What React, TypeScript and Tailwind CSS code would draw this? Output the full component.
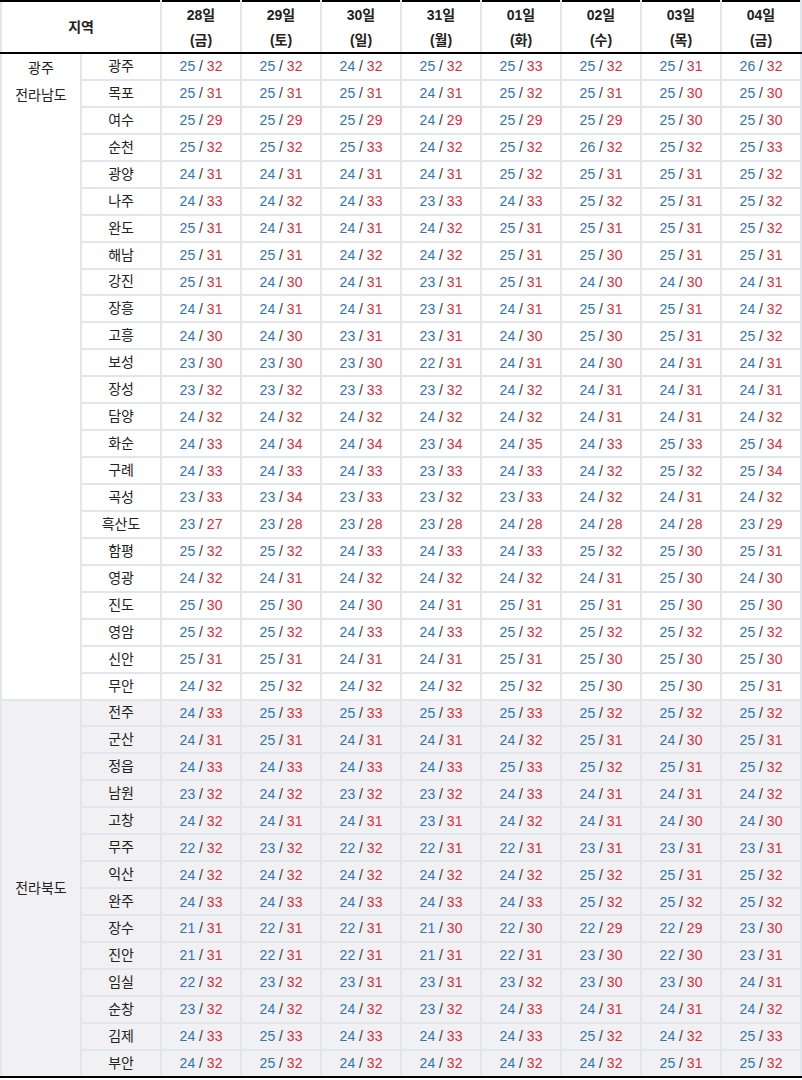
const days = [
  ["28일", "(금)"],
  ["29일", "(토)"],
  ["30일", "(일)"],
  ["31일", "(월)"],
  ["01일", "(화)"],
  ["02일", "(수)"],
  ["03일", "(목)"],
  ["04일", "(금)"],
];

// each row: city, then "min/max" per day
const jeonnam: [string, string][] = [
  ["광주", "25/32 25/32 24/32 25/32 25/33 25/32 25/31 26/32"],
  ["목포", "25/31 25/31 25/31 24/31 25/32 25/31 25/30 25/30"],
  ["여수", "25/29 25/29 25/29 24/29 25/29 25/29 25/30 25/30"],
  ["순천", "25/32 25/32 25/33 24/32 25/32 26/32 25/32 25/33"],
  ["광양", "24/31 24/31 24/31 24/31 25/32 25/31 25/31 25/32"],
  ["나주", "24/33 24/32 24/33 23/33 24/33 25/32 25/31 25/32"],
  ["완도", "25/31 24/31 24/31 24/32 25/31 25/31 25/31 25/32"],
  ["해남", "25/31 25/31 24/32 24/32 25/31 25/30 25/31 25/31"],
  ["강진", "25/31 24/30 24/31 23/31 25/31 24/30 24/30 24/31"],
  ["장흥", "24/31 24/31 24/31 23/31 24/31 25/31 25/31 24/32"],
  ["고흥", "24/30 24/30 23/31 23/31 24/30 25/30 25/31 25/32"],
  ["보성", "23/30 23/30 23/30 22/31 24/31 24/30 24/31 24/31"],
  ["장성", "23/32 23/32 23/33 23/32 24/32 24/31 24/31 24/31"],
  ["담양", "24/32 24/32 24/32 24/32 24/32 24/31 24/31 24/32"],
  ["화순", "24/33 24/34 24/34 23/34 24/35 24/33 25/33 25/34"],
  ["구례", "24/33 24/33 24/33 23/33 24/33 24/32 25/32 25/34"],
  ["곡성", "23/33 23/34 23/33 23/32 23/33 24/32 24/31 24/32"],
  ["흑산도", "23/27 23/28 23/28 23/28 24/28 24/28 24/28 23/29"],
  ["함평", "25/32 25/32 24/33 24/33 24/33 25/32 25/30 25/31"],
  ["영광", "24/32 24/31 24/32 24/32 24/32 24/31 25/30 24/30"],
  ["진도", "25/30 25/30 24/30 24/31 25/31 25/31 25/30 25/30"],
  ["영암", "25/32 25/32 24/33 24/33 25/32 25/32 25/32 25/32"],
  ["신안", "25/31 25/31 24/31 24/31 25/31 25/30 25/30 25/30"],
  ["무안", "24/32 25/32 24/32 24/32 25/32 25/30 25/30 25/31"],
];

const jeonbuk: [string, string][] = [
  ["전주", "24/33 25/33 25/33 25/33 25/33 25/32 25/32 25/32"],
  ["군산", "24/31 25/31 24/31 24/31 24/32 25/31 24/30 25/31"],
  ["정읍", "24/33 24/33 24/33 24/33 25/33 25/32 25/31 25/32"],
  ["남원", "23/32 24/32 23/32 23/32 24/33 24/31 24/31 24/32"],
  ["고창", "24/32 24/31 24/31 23/31 24/32 24/31 24/30 24/30"],
  ["무주", "22/32 23/32 22/32 22/31 22/31 23/31 23/31 23/31"],
  ["익산", "24/32 24/32 24/32 24/32 24/32 25/32 25/31 25/32"],
  ["완주", "24/33 24/33 24/33 24/33 24/33 25/32 25/32 25/32"],
  ["장수", "21/31 22/31 22/31 21/30 22/30 22/29 22/29 23/30"],
  ["진안", "21/31 22/31 22/31 21/31 22/31 23/30 22/30 23/31"],
  ["임실", "22/32 23/32 23/31 23/31 23/32 23/30 23/30 24/31"],
  ["순창", "23/32 24/32 24/32 23/32 24/33 24/31 24/31 24/32"],
  ["김제", "24/33 25/33 24/33 24/33 24/33 25/32 24/32 25/33"],
  ["부안", "24/32 25/32 24/32 24/32 24/32 24/32 25/31 25/32"],
];

function Temp({ v }: { v: string }) {
  const [lo, hi] = v.split("/");
  return (
    <span className="font-['Liberation_Sans','Noto_Sans_CJK_KR',sans-serif] text-[14px]">
      <span className="text-[#2e74b5]">{lo}</span>
      <span className="text-[#333]"> / </span>
      <span className="text-[#d92e3d]">{hi}</span>
    </span>
  );
}

function Rows({
  rows,
  region,
  gray,
  last,
}: {
  rows: [string, string][];
  region: React.ReactNode;
  gray?: boolean;
  last?: boolean;
}) {
  return (
    <>
      {rows.map(([city, temps], i) => {
        const isLast = last && i === rows.length - 1;
        const cell =
          "h-[26.95px] p-0 border-2 border-[#e1e5ec] text-center " + (isLast ? "border-b-black" : "");
        return (
          <tr key={city} className={gray ? "bg-[#f1f1f3]" : ""}>
            {i === 0 && (
              <td
                rowSpan={rows.length}
                className={
                  "border-2 border-[#e1e5ec] text-center text-[14px] text-[#222] leading-[27px] " +
                  (gray ? "align-middle " : "align-top pt-[1px] ") +
                  (last ? "border-b-black" : "")
                }
              >
                {region}
              </td>
            )}
            <td className={cell + " text-[14px] text-[#222]"}>{city}</td>
            {temps.split(" ").map((t, j) => (
              <td key={j} className={cell}>
                <Temp v={t} />
              </td>
            ))}
          </tr>
        );
      })}
    </>
  );
}

export default function App() {
  return (
    <div className="w-[802px] bg-white font-['Liberation_Sans','Noto_Sans_CJK_KR',sans-serif]">
      <table className="w-[800px] table-fixed border-collapse">
        <colgroup>
          {Array.from({ length: 10 }).map((_, i) => (
            <col key={i} className="w-[80px]" />
          ))}
        </colgroup>
        <thead>
          <tr>
            <th
              colSpan={2}
              className="border-x-2 border-x-[#e1e5ec] border-t-2 border-t-black border-b-2 border-b-black text-[14px] font-bold text-[#222] align-middle"
            >
              지역
            </th>
            {days.map(([d, w]) => (
              <th
                key={d}
                className="h-[50px] border-x-2 border-x-[#e1e5ec] border-t-2 border-t-black border-b-2 border-b-black text-[14px] font-bold text-[#222] p-0"
              >
                <div className="leading-[27px]">{d}</div>
                <div className="leading-[23px]">{w}</div>
              </th>
            ))}
          </tr>
        </thead>
        <tbody>
          <Rows
            rows={jeonnam}
            region={
              <>
                <div>광주</div>
                <div>전라남도</div>
              </>
            }
          />
          <Rows rows={jeonbuk} region="전라북도" gray last />
        </tbody>
      </table>
    </div>
  );
}
